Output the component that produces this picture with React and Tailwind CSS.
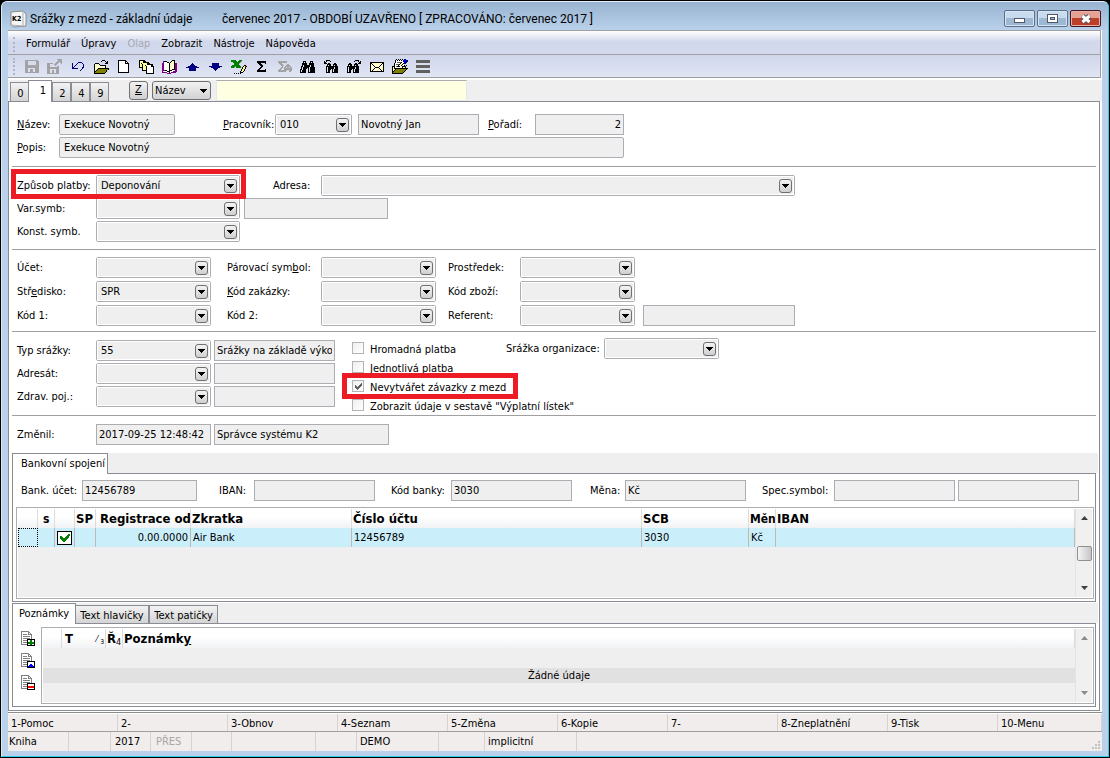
const palette = {
    k: "#000000",
    w: "#ffffff",
    y: "#ffff99",
    o: "#808000",
    b: "#000080",
    g: "#008000",
    s: "#a3a3a6",
    p: "#800080",
    r: "#ee0000",
    u: "#0000ff",
    d: "#606060",
};

// Draws an old style bitmap icon, one character per pixel
function PixelIcon({ rows }) {
    return (
        <svg width={rows[0].length} height={rows.length} shapeRendering="crispEdges" aria-hidden="true">
            {rows.flatMap((row, y) =>
                [...row].map((c, x) =>
                    palette[c] ? <rect key={x + "-" + y} x={x} y={y} width="1" height="1" fill={palette[c]} /> : null
                )
            )}
        </svg>
    );
}

const icons = {
    save: [
        "sssssssssssss.",
        "sss........sss",
        "sss........sss",
        "sss........sss",
        "sss........sss",
        "ssssssssssssss",
        "ssssssssssssss",
        "ssssssssssssss",
        "sss.......ssss",
        "sss..sss..ssss",
        "sss..sss..ssss",
        "sss..sss..ssss",
        "ssssssssssssss",
    ],
    saveAs: [
        "..........sssss",
        "...........ssss",
        "..........sssss",
        ".........sss.ss",
        "ssssss..sss...s",
        "sss....sss.....",
        "sss.....s......",
        "sss.......ss...",
        "ssssssssssss...",
        "ssssssssssss...",
        "sss......sss...",
        "sss..ss..sss...",
        "sss..ss..sss...",
        "sss..ss..sss...",
        "ssssssssssss...",
    ],
    undo: [
        "......bbbb..",
        "b....b....b.",
        "b...b......b",
        "b..b.......b",
        "b.b........b",
        "bb........bb",
        "bbbbbb....b.",
        ".........b..",
        "........b...",
    ],
    open: [
        ".........kkk....",
        "........k...k.k.",
        ".............kk.",
        "..kkkk......kkk.",
        ".kywywk.........",
        ".kwywywkkkkkk...",
        ".kywywywywywk...",
        ".kwywywywywyk...",
        ".kywykkkkkkkkkkk",
        ".kwykooooooooook",
        ".kykoooooooook..",
        ".kkooooooooook..",
        ".kooooooooook...",
        ".kkkkkkkkkkk....",
    ],
    fresh: [
        "kkkkkkkk...",
        "kwwwwwwkk..",
        "kwwwwwwkwk.",
        "kwwwwwwkkkk",
        "kwwwwwwwwwk",
        "kwwwwwwwwwk",
        "kwwwwwwwwwk",
        "kwwwwwwwwwk",
        "kwwwwwwwwwk",
        "kwwwwwwwwwk",
        "kwwwwwwwwwk",
        "kwwwwwwwwwk",
        "kkkkkkkkkkk",
    ],
    copy: [
        "kkkkkk.........",
        "kyyykkk........",
        "kyyykkkkkk.....",
        "kykyyyyykkk....",
        "kyykyyyykkkkkk.",
        "kyykyykwwwwwkk.",
        "kyykyyykwwwwkkk",
        "kkkkyyykwwwwwwk",
        "...kyyykwwwwwwk",
        "...kyyykwwwwwwk",
        "...kkkkkwwwwwwk",
        ".......kwwwwwwk",
        ".......kwwwwwwk",
        ".......kkkkkkkk",
    ],
    book: [
        "..........kkk..",
        ".pkkk....kyyk..",
        ".pwwwkk.kywyk..",
        "ppwwwwwkwywykpp",
        "ppwwwwwkywywkpp",
        "ppwwwwwkwywykpp",
        "ppwwwwwkywywkpp",
        "ppwwwwwkwywykpp",
        "ppwwwwwkywywkpp",
        "ppwwwwwkwykkkpp",
        "pppkkwwkkkwwwpp",
        "p.wwwkkkwwwpppp",
        "pppppwwkwppppp.",
        ".....pppp......",
    ],
    up: [
        "......b......",
        ".....bbb.....",
        "....bbbbb....",
        "..bbbbbbbbb..",
        "bbbbbbbbbbbbb",
        "...bbbbbbb...",
        "...bbbbbbb...",
        "...bbbbbbb...",
    ],
    down: [
        "...bbbbbbb...",
        "...bbbbbbb...",
        "...bbbbbbb...",
        "bbbbbbbbbbbbb",
        "..bbbbbbbbb..",
        "....bbbbb....",
        ".....bbb.....",
        "......b......",
    ],
    excel: [
        "ggggg...ggg.....",
        "gggggg.gggs.....",
        "..gggggggs......",
        "...gggggs.......",
        "...ggggg........",
        ".gggggggg....kk.",
        "ggggsggggg..kyrk",
        "gggs.ggggg.kyyk.",
        "...........kyyk.",
        "..........kyyk..",
        "..........kyyk..",
        ".........kyyk...",
        ".........kkk....",
        "...k.k.k.k......",
    ],
    sum: [
        "kkkkkkkkk",
        "kkkkkkkkk",
        ".kkk....k",
        "..kkk....",
        "...kkk...",
        "....kk...",
        "...kk....",
        "..kk.....",
        ".kk.....k",
        "kkkkkkkkk",
        "kkkkkkkkk",
    ],
    sumGray: [
        "sssssssss.....",
        "sssssssss.....",
        ".sss..........",
        "..sss....ss...",
        "...sss..ssss..",
        "....s..ssssss.",
        "...ss.ss.ss.ss",
        "..ss..ssssssss",
        ".ss...ssssssss",
        "sssssssss..sss",
        "ssssssss...ss.",
    ],
    find: [
        "...kkk....kkk..",
        "...k.k....k.k..",
        "..kkkkk..kkkkk.",
        "..kkkkk..kkkkk.",
        "..k.kkkkkk.kkk.",
        ".kk.kkkkkk.kkk.",
        ".k.kkkkkk.kkkkk",
        ".k.kkkk.k.kkkkk",
        "kk.kkk..k.kkkkk",
        "k.kkkk..k.kkkkk",
        "k.kkkk..k.kkkkk",
        "kkkkkk..kkkkkkk",
    ],
    findPrev: [
        "..kkkk........",
        "k.k...k.......",
        "kk............",
        "kkk.kk....kk..",
        "...kkkk..kkkk.",
        "...k.kk..k.kk.",
        "..kkkkkkkkkkkk",
        "..k.kkkkkk.kkk",
        "..k.kkkkkk.kkk",
        "..k.kkk.k.kkkk",
        "..k.kk..k.kkkk",
        "..k.kk..k.kkkk",
        "..kkkk..kkkkkk",
    ],
    findNext: [
        "........kkkk..",
        ".......k...k.k",
        "............kk",
        "..kk....kk.kkk",
        ".kkkk..kkkk...",
        ".k.kk..k.kk...",
        "kkkkkkkkkkkk..",
        "k.kkkkkk.kkk..",
        "k.kkkkkk.kkk..",
        "k.kkk.k.kkkk..",
        "k.kk..k.kkkk..",
        "k.kk..k.kkkk..",
        "kkkk..kkkkkk..",
    ],
    mail: [
        "kkkkkkkkkkkkkk",
        "kkyywyywyywykk",
        "kwkywywywywkwk",
        "kywkywywywkwyk",
        "kwywkywywkywyk",
        "kywywkkkkwywyk",
        "kwywkwywykywyk",
        "kywkywywywkwyk",
        "kwkywywywywkyk",
        "kkkkkkkkkkkkkk",
    ],
    notes: [
        "....k.k.k.k.bb..",
        "...kwkwkwkwbuubb",
        "...kwwwwwwwbubbb",
        "...kwddddkwwbbb.",
        "..kwwwwwkywkbb..",
        "..kwdddkyykw....",
        "..kwwwkyykwwk.k.",
        "kkkwdkkkwwkkkk..",
        "kykwwwwwwwkyyk..",
        "kykkkkkkkkkkkkkk",
        "kyykooooooooook.",
        "kykooooooooook..",
        "kkooooooooook...",
        "kooooooooook....",
        "kkkkkkkkkkk.....",
    ],
    menu: [
        "dddddddddddddd",
        "dddddddddddddd",
        "dddddddddddddd",
        "..............",
        "..............",
        "dddddddddddddd",
        "dddddddddddddd",
        "dddddddddddddd",
        "..............",
        "..............",
        "dddddddddddddd",
        "dddddddddddddd",
        "dddddddddddddd",
    ],
    arrow: [
        "kkkkkkk",
        ".kkkkk.",
        "..kkk..",
        "...k...",
    ],
    check: [
        "........gg",
        ".......ggg",
        "gg....ggg.",
        "ggg..gggg.",
        "gggggggg..",
        ".gggggg...",
        "..gggg....",
        "...gg.....",
    ],
    checkGray: [
        "......d",
        ".....dd",
        "d...ddd",
        "dd.ddd.",
        "ddddd..",
        ".ddd...",
        "..d....",
    ],
};

const tools = [
    ["Uložit", "save"],
    ["Uložit jako", "saveAs"],
    ["Zpět", "undo"],
    ["Otevřít", "open"],
    ["Nový", "fresh"],
    ["Kopie", "copy"],
    ["Kniha", "book"],
    ["Předchozí", "up"],
    ["Další", "down"],
    ["Excel", "excel"],
    ["Součet", "sum"],
    ["Součet výběru", "sumGray"],
    ["Hledat", "find"],
    ["Hledat předchozí", "findPrev"],
    ["Hledat další", "findNext"],
    ["E-mail", "mail"],
    ["Poznámky", "notes"],
    ["Menu", "menu"],
];

function Label({ id, className, children }) {
    return (
        <label htmlFor={id} className={"shrink-0 pt-[2px] whitespace-nowrap " + className}>
            {children}
        </label>
    );
}

function Field({ id, value = "", className = "", label }) {
    return (
        <input
            id={id}
            aria-label={label}
            readOnly
            value={value}
            className={"h-[21px] min-w-0 border border-[#abadb3] bg-[#efefef] px-[2px] outline-none " + className}
        />
    );
}

function Combo({ id, value = "", className }) {
    return (
        <div className={"relative h-[21px] rounded-[2px] border border-[#abadb3] bg-[#f4f4f4] " + className}>
            <select id={id} defaultValue={value} className="block h-full w-full appearance-none border border-white bg-[#efefef] pt-px pl-[3px] outline-none">
                <option>{value}</option>
            </select>
            <span className="pointer-events-none absolute top-[3px] right-[2px] flex h-[14px] w-[13px] items-center justify-center rounded-[3px] border border-[#707070] bg-linear-to-b from-[#f4f4f4] to-[#cfcfcf]">
                <PixelIcon rows={icons.arrow} />
            </span>
        </div>
    );
}

function CheckField({ id, checked = false, children }) {
    return (
        <div className="flex h-[19px] items-start">
            <span className="mt-px grid h-[12px] w-[12px] place-items-center">
                <input
                    id={id}
                    type="checkbox"
                    defaultChecked={checked}
                    className="col-start-1 row-start-1 h-[12px] w-[12px] appearance-none border border-[#b4b4b4] bg-linear-to-br from-[#efefef] to-white"
                />
                {checked && (
                    <span className="pointer-events-none col-start-1 row-start-1">
                        <PixelIcon rows={icons.checkGray} />
                    </span>
                )}
            </span>
            <label htmlFor={id} className="ml-[6px] leading-[18px] whitespace-nowrap">
                {children}
            </label>
        </div>
    );
}

function PageTab({ children, active }) {
    return (
        <button
            className={
                active
                    ? "z-10 -mb-px h-[22px] w-[24px] border-x border-t border-[#898c95] bg-white pl-[6px]"
                    : "-mr-px h-[19px] w-[19px] border-x border-t border-[#898c95] bg-linear-to-b from-[#f2f2f2] to-[#d4d4d4] pt-[3px] pl-[2px]"
            }
        >
            {children}
        </button>
    );
}

function ScrollBar({ thumb }) {
    const tone = thumb ? "#404040" : "#8a8a8a";
    return (
        <div className="flex w-[17px] shrink-0 flex-col items-center justify-between border-l border-[#e3e3e3] bg-[#f0f0f0] py-[7px]">
            <svg width="7" height="4" aria-hidden="true"><path d="M3.5 0L7 4H0z" fill={tone} /></svg>
            {thumb && <span className="h-[15px] w-[15px] rounded-[2px] border border-[#8f8f8f] bg-linear-to-r from-[#f5f5f5] to-[#c6c6c9]" />}
            <svg width="7" height="4" aria-hidden="true"><path d="M0 0H7L3.5 4z" fill={tone} /></svg>
        </div>
    );
}

function NoteIcon({ kind }) {
    return (
        <svg width="15" height="16" shapeRendering="crispEdges" aria-hidden="true">
            <path d="M1.5 .5H8.5L11.5 3.5V13.5H1.5z" fill="#fff" stroke="#808080" />
            <path d="M8.5 .5V3.5H11.5M3 3.5H7M3 5.5H10M3 7.5H10M3 9.5H7M3 11.5H7" fill="none" stroke="#808080" />
            <rect x="7.5" y="8.5" width="7" height="6" fill="#fff" stroke="#000" />
            {kind === "add" && <path d="M10 9h2v2h2v2h-2v1h-2v-1h-2v-2h2z" fill="#008000" />}
            {kind === "edit" && <path d="M10 11h2v1h1v1h1v1H8v-1h1v-1h1z" fill="#0000ff" />}
            {kind === "remove" && <path d="M8 11h6v2H8z" fill="#ff0000" />}
        </svg>
    );
}

const headCell = "border-r border-[#dcdcdc] p-0 px-px pt-px text-left whitespace-nowrap overflow-hidden";
const bodyCell = "border-r border-[#bdb9b5] p-0 px-[2px] whitespace-nowrap overflow-hidden";
const line = "border-t border-[#a0a0a0] mx-[3px]";

export default function App() {
    return (
        <div className="flex min-h-screen flex-col border border-black bg-black font-['DejaVu_Sans_Condensed','Noto_Sans',sans-serif] text-[11px] text-black">
            <div className="flex flex-1 flex-col rounded-t-[6px] border border-t-[#e6f0fa] border-r-[#2ccbe8] border-b-[#2ccbe8] border-l-[#dcebf8] bg-[#b9d1ea] px-[6px] pb-[5px]">

                {/* Title bar */}
                <header className="-mx-[6px] flex h-[28px] items-center rounded-t-[5px] bg-linear-to-b from-[#98b3d1] to-[#b9d1ea] pt-[5px] pr-[7px] pl-[8px] font-[Roboto,'Noto_Sans',sans-serif] text-[12px]">
                    <svg width="17" height="18" aria-hidden="true">
                        <path d="M1 2l12-1 3 3v12l-12 1-3-2z" fill="#f6f6f6" stroke="#8a8a8a" />
                        <path d="M13 1v15M1 15l12 1" stroke="#b0b0b0" fill="none" />
                        <text x="2" y="11" fontSize="7" fontWeight="bold" fontFamily="DejaVu Sans Condensed">K2</text>
                    </svg>
                    <h1 className="ml-[3px] w-[192px] whitespace-nowrap">Srážky z mezd - základní údaje</h1>
                    <span className="whitespace-nowrap">červenec 2017 - OBDOBÍ UZAVŘENO [ ZPRACOVÁNO: červenec 2017 ]</span>
                    <div className="ml-auto flex gap-[2px]">
                        <button aria-label="Minimalizovat" className="flex h-[17px] w-[31px] items-center justify-center rounded-[2px] border border-[#5b6f8b] bg-linear-to-b from-[#c8dbee] from-50% to-[#9db8d3] to-50% shadow-[inset_0_0_0_1px_#d7e6f4]">
                            <svg width="11" height="11" shapeRendering="crispEdges"><rect x=".5" y="5.5" width="10" height="4" fill="#fff" stroke="#535666" /></svg>
                        </button>
                        <button aria-label="Maximalizovat" className="flex h-[17px] w-[31px] items-center justify-center rounded-[2px] border border-[#5b6f8b] bg-linear-to-b from-[#c8dbee] from-50% to-[#9db8d3] to-50% shadow-[inset_0_0_0_1px_#d7e6f4]">
                            <svg width="11" height="9" shapeRendering="crispEdges">
                                <rect x=".5" y=".5" width="10" height="8" fill="#fff" stroke="#535666" />
                                <rect x="3.5" y="3.5" width="4" height="2" fill="#9db8d3" stroke="#535666" />
                            </svg>
                        </button>
                        <button aria-label="Zavřít" className="flex h-[17px] w-[31px] items-center justify-center rounded-[2px] border border-[#431422] bg-linear-to-b from-[#e4a294] from-50% to-[#bd3f27] to-50% shadow-[inset_0_0_0_1px_#e6b0a6]">
                            <svg width="12" height="10">
                                <path d="M2.5 2l7 6M9.5 2l-7 6" stroke="#535666" strokeWidth="5" />
                                <path d="M2.5 2l7 6M9.5 2l-7 6" stroke="#fff" strokeWidth="3" />
                            </svg>
                        </button>
                    </div>
                </header>

                <main className="flex flex-1 flex-col bg-white">

                    {/* Menu and toolbar */}
                    <div className="mr-px border border-l-0 border-[#a0a0a0]">
                        <nav className="flex h-[23px] items-center gap-[11px] bg-linear-to-b from-white to-[#d3d9ec] to-45% pt-[4px] pl-[5px]">
                            <span className="h-[15px] border-l-2 border-dotted border-[#b0b4c4]" />
                            <button>Formulář</button>
                            <button>Úpravy</button>
                            <button disabled className="text-[#a6a8b4]">Olap</button>
                            <button>Zobrazit</button>
                            <button>Nástroje</button>
                            <button>Nápověda</button>
                        </nav>
                        <div className="flex h-[23px] items-center border-t border-[#a0a0a0] bg-linear-to-b from-[#cfd6ea] to-[#e1e6f5] pt-px pl-[5px]">
                            <span className="mr-[5px] h-[17px] border-l-2 border-dotted border-[#b0b4c4]" />
                            {tools.map(([name, icon]) => (
                                <button key={name} aria-label={name} className="flex h-[20px] w-[23px] items-center justify-center">
                                    <PixelIcon rows={icons[icon]} />
                                </button>
                            ))}
                        </div>
                    </div>

                    {/* Page tabs and quick filter */}
                    <div className="mt-[2px] flex h-[21px] items-end bg-[#efefef] pl-[2px]">
                        <PageTab>0</PageTab>
                        <PageTab active>1</PageTab>
                        <PageTab>2</PageTab>
                        <span className="w-px" />
                        <PageTab>4</PageTab>
                        <span className="w-px" />
                        <PageTab>9</PageTab>
                        <button className="mb-[1px] ml-[21px] h-[19px] w-[19px] rounded-[3px] border border-[#707070] bg-linear-to-b from-[#f2f2f2] to-[#cfcfcf]">
                            <u>Z</u>
                        </button>
                        <div className="relative mb-[1px] ml-[4px] w-[59px]">
                            <select aria-label="Řazení" className="block h-[19px] w-full appearance-none rounded-[3px] border border-[#707070] bg-linear-to-b from-[#f2f2f2] to-[#d2d2d2] pt-px pl-[2px]">
                                <option>Název</option>
                            </select>
                            <span className="pointer-events-none absolute top-[8px] right-[4px]">
                                <PixelIcon rows={icons.arrow} />
                            </span>
                        </div>
                        <input aria-label="Filtr" className="ml-[5px] h-[21px] w-[251px] border border-[#e3e9ef] border-t-[#abadb3] bg-[#ffffe1]" />
                    </div>

                    {/* Form */}
                    <div className="mr-[2px] flex flex-1 flex-col border border-[#898c95]">
                        <section className="flex flex-col gap-[2px] pt-[12px] pb-[8px] pl-[8px]">
                            <div className="flex items-center">
                                <Label id="nazev" className="w-[42px]"><u>N</u>ázev:</Label>
                                <Field id="nazev" value="Exekuce Novotný" className="w-[116px] rounded-[2px] pl-[4px]" />
                                <Label id="pracovnik" className="ml-[48px] w-[52px]"><u>P</u>racovník:</Label>
                                <Combo id="pracovnik" value="010" className="w-[77px]" />
                                <Field value="Novotný Jan" label="Jméno pracovníka" className="ml-[6px] w-[121px]" />
                                <Label id="poradi" className="ml-[9px] w-[47px]"><u>P</u>ořadí:</Label>
                                <Field id="poradi" value="2" className="w-[89px] text-right" />
                            </div>
                            <div className="flex items-center">
                                <Label id="popis" className="w-[42px]"><u>P</u>opis:</Label>
                                <Field id="popis" value="Exekuce Novotný" className="w-[565px] rounded-[2px] pl-[4px]" />
                            </div>
                        </section>

                        <div className={line} />

                        <section className="relative flex flex-col gap-[2px] pt-[8px] pb-[7px] pl-[8px]">
                            <div className="flex items-center">
                                <Label id="zpusob" className="w-[79px]">Způsob platby:</Label>
                                <Combo id="zpusob" value="Deponování" className="w-[144px]" />
                                <Label id="adresa" className="ml-[33px] w-[48px]">Adresa:</Label>
                                <Combo id="adresa" className="w-[474px]" />
                            </div>
                            <div className="flex items-center">
                                <Label id="varsymb" className="w-[79px]">Var.symb:</Label>
                                <Combo id="varsymb" className="w-[144px]" />
                                <Field label="Popis var. symbolu" className="ml-[4px] w-[144px]" />
                            </div>
                            <div className="flex items-center">
                                <Label id="konstsymb" className="w-[79px]">Konst. symb.</Label>
                                <Combo id="konstsymb" className="w-[144px]" />
                            </div>
                            <span className="pointer-events-none absolute top-[2px] left-[2px] h-[30px] w-[235px] border-5 border-[#ed1c24]" />
                        </section>

                        <div className={line} />

                        <section className="flex flex-col gap-[3px] pt-[7px] pb-[5px] pl-[8px]">
                            <div className="flex items-center">
                                <Label id="ucet" className="w-[79px]">Účet:</Label>
                                <Combo id="ucet" className="w-[115px]" />
                                <Label id="parovaci" className="ml-[16px] w-[94px]">Párovací sym<u>b</u>ol:</Label>
                                <Combo id="parovaci" className="w-[115px]" />
                                <Label id="prostredek" className="ml-[12px] w-[72px]">Prostředek:</Label>
                                <Combo id="prostredek" className="w-[115px]" />
                            </div>
                            <div className="flex items-center">
                                <Label id="stredisko" className="w-[79px]">Stř<u>e</u>disko:</Label>
                                <Combo id="stredisko" value="SPR" className="w-[115px]" />
                                <Label id="zakazka" className="ml-[16px] w-[94px]"><u>K</u>ód zakázky:</Label>
                                <Combo id="zakazka" className="w-[115px]" />
                                <Label id="zbozi" className="ml-[12px] w-[72px]">Kód zboží:</Label>
                                <Combo id="zbozi" className="w-[115px]" />
                            </div>
                            <div className="flex items-center">
                                <Label id="kod1" className="w-[79px]">Kód 1:</Label>
                                <Combo id="kod1" className="w-[115px]" />
                                <Label id="kod2" className="ml-[16px] w-[94px]">Kód 2:</Label>
                                <Combo id="kod2" className="w-[115px]" />
                                <Label id="referent" className="ml-[12px] w-[72px]">Referent:</Label>
                                <Combo id="referent" className="w-[115px]" />
                                <Field label="Jméno referenta" className="ml-[8px] w-[152px]" />
                            </div>
                        </section>

                        <div className={line} />

                        <section className="flex items-start pt-[8px] pb-[8px] pl-[8px]">
                            <div className="flex flex-col gap-[2px]">
                                <div className="flex items-center">
                                    <Label id="typ" className="w-[79px]">Typ srážky:</Label>
                                    <Combo id="typ" value="55" className="w-[115px]" />
                                    <Field label="Název srážky" value="Srážky na základě výkon" className="ml-[3px] w-[121px]" />
                                </div>
                                <div className="flex items-center">
                                    <Label id="adresat" className="w-[79px]">Adresát:</Label>
                                    <Combo id="adresat" className="w-[115px]" />
                                    <Field label="Název adresáta" className="ml-[3px] w-[121px]" />
                                </div>
                                <div className="flex items-center">
                                    <Label id="poj" className="w-[79px]">Zdrav. poj.:</Label>
                                    <Combo id="poj" className="w-[115px]" />
                                    <Field label="Název pojišťovny" className="ml-[3px] w-[121px]" />
                                </div>
                            </div>
                            <div className="relative ml-[17px] h-[67px] w-[154px] pt-px">
                                <CheckField id="hromadna">Hromadná platba</CheckField>
                                <CheckField id="jednotliva">Jednotlivá platba</CheckField>
                                <CheckField id="zavazky" checked>Nevytvářet závazky z mezd</CheckField>
                                <CheckField id="listek">Zobrazit údaje v sestavě "Výplatní lístek"</CheckField>
                                <span className="pointer-events-none absolute top-[33px] left-[-10px] h-[26px] w-[176px] border-5 border-[#ed1c24]" />
                            </div>
                            <div className="-mt-[2px] flex items-center">
                                <Label id="organizace" className="w-[98px]">Srážka organizace:</Label>
                                <Combo id="organizace" className="w-[115px]" />
                            </div>
                        </section>

                        <div className={line} />

                        <section className="flex items-center gap-[3px] pt-[8px] pb-[8px] pl-[8px]">
                            <Label id="zmenil" className="w-[76px]">Změnil:</Label>
                            <Field id="zmenil" value="2017-09-25 12:48:42" className="w-[115px]" />
                            <Field label="Změnil uživatel" value="Správce systému K2" className="w-[175px]" />
                        </section>

                        {/* Bank connection */}
                        <div className="mr-px ml-[3px] flex h-[20px] bg-[#efefef]">
                            <button className="z-10 -mb-px h-[21px] w-[96px] border-x border-t border-[#898c95] bg-white pl-[6px] whitespace-nowrap">Bankovní spojení</button>
                        </div>
                        <section className="mx-[3px] border border-[#898c95] pt-[6px] pr-px pb-[2px] pl-[3px]">
                            <div className="flex items-center pl-[5px]">
                                <Label id="bucet" className="w-[61px]">Bank. účet:</Label>
                                <Field id="bucet" value="12456789" className="w-[115px]" />
                                <Label id="iban" className="ml-[22px] w-[35px]">IBAN:</Label>
                                <Field id="iban" className="w-[121px]" />
                                <Label id="kodb" className="ml-[16px] w-[60px]">Kód banky:</Label>
                                <Field id="kodb" value="3030" className="w-[121px]" />
                                <Label id="mena" className="ml-[18px] w-[35px]">Měna:</Label>
                                <Field id="mena" value="Kč" className="w-[121px]" />
                                <Label id="spec" className="ml-[16px] w-[72px]">Spec.symbol:</Label>
                                <Field id="spec" className="w-[121px]" />
                                <Field label="Spec. symbol 2" className="ml-[3px] w-[121px]" />
                            </div>
                            <div className="mt-[6px] flex h-[92px] border border-[#abadb3] bg-white p-px">
                                <div className="flex-1 bg-[#efefef]">
                                    <table className="w-full table-fixed border-separate border-spacing-0">
                                        <colgroup>
                                            <col className="w-[20px]" />
                                            <col className="w-[17px]" />
                                            <col className="w-[20px]" />
                                            <col className="w-[21px]" />
                                            <col className="w-[95px]" />
                                            <col className="w-[161px]" />
                                            <col className="w-[290px]" />
                                            <col className="w-[107px]" />
                                            <col className="w-[27px]" />
                                            <col />
                                        </colgroup>
                                        <thead>
                                            <tr className="h-[19px] bg-linear-to-b from-white from-40% to-[#f1f2f4] text-[13px] leading-[18px]">
                                                <th className={headCell} />
                                                <th className={headCell + " pl-[5px] text-[12px]"}>s</th>
                                                <th className={headCell} />
                                                <th className={headCell}>SP</th>
                                                <th className={headCell + " pl-[4px]"}>Registrace od</th>
                                                <th className={headCell}>Zkratka</th>
                                                <th className={headCell}>Číslo účtu</th>
                                                <th className={headCell}>SCB</th>
                                                <th className={headCell + " pr-0 text-[12px]"}>Měn</th>
                                                <th className={headCell}>IBAN</th>
                                            </tr>
                                        </thead>
                                        <tbody>
                                            <tr className="h-[17px] bg-[#cbeffa] leading-[19px]">
                                                <td className="border border-dotted border-black p-0" />
                                                <td className={bodyCell} />
                                                <td className={bodyCell}>
                                                    <span className="flex h-[14px] w-[15px] items-center justify-center border border-black bg-white">
                                                        <PixelIcon rows={icons.check} />
                                                    </span>
                                                </td>
                                                <td className={bodyCell} />
                                                <td className={bodyCell + " text-right"}>0.00.0000</td>
                                                <td className={bodyCell}>Air Bank</td>
                                                <td className={bodyCell}>12456789</td>
                                                <td className={bodyCell}>3030</td>
                                                <td className={bodyCell}>Kč</td>
                                                <td className={bodyCell} />
                                            </tr>
                                        </tbody>
                                    </table>
                                </div>
                                <ScrollBar thumb />
                            </div>
                        </section>

                        {/* Notes */}
                        <div className="mt-px mr-px ml-[3px] flex h-[20px] items-end bg-[#efefef]">
                            <button className="z-10 -mb-px h-[21px] w-[64px] border-x border-t border-[#898c95] bg-white">Poznámky</button>
                            <button className="h-[18px] w-[73px] border-t border-r border-[#898c95] bg-linear-to-b from-[#f2f2f2] to-[#d4d4d4] pt-[2px] whitespace-nowrap">Text hlavičky</button>
                            <button className="h-[18px] w-[69px] border-x border-t border-[#898c95] bg-linear-to-b from-[#f2f2f2] to-[#d4d4d4] pt-[2px] whitespace-nowrap">Text patičky</button>
                        </div>
                        <section className="mx-[3px] mb-[3px] flex flex-1 border border-[#898c95] pt-[3px] pr-[1px] pb-[2px]">
                            <div className="flex w-[28px] flex-col items-center gap-[6px] pt-[4px]">
                                <button aria-label="Přidat poznámku"><NoteIcon kind="add" /></button>
                                <button aria-label="Upravit poznámku"><NoteIcon kind="edit" /></button>
                                <button aria-label="Smazat poznámku"><NoteIcon kind="remove" /></button>
                            </div>
                            <div className="flex flex-1 border border-[#abadb3] p-px">
                                <div className="flex-1 bg-[#efefef]">
                                    <table className="w-full table-fixed border-separate border-spacing-0">
                                        <colgroup>
                                            <col className="w-[19px]" />
                                            <col className="w-[44px]" />
                                            <col className="w-[17px]" />
                                            <col />
                                        </colgroup>
                                        <thead>
                                            <tr className="h-[19px] bg-linear-to-b from-white from-40% to-[#f1f2f4] text-[13px] leading-[18px]">
                                                <th className={headCell} />
                                                <th className={headCell + " pl-[3px]"}>
                                                    <span className="flex justify-between">
                                                        T
                                                        <span className="text-[9px] font-normal">⁄ <sub>3</sub></span>
                                                    </span>
                                                </th>
                                                <th className={headCell}>Ř<sub className="text-[9px] font-normal">4</sub></th>
                                                <th className={headCell}>Poznámk<u>y</u></th>
                                            </tr>
                                        </thead>
                                        <tbody>
                                            <tr className="h-[20px]"><td colSpan={4} /></tr>
                                            <tr className="h-[15px] bg-[#e1e1e1] leading-[15px]">
                                                <td colSpan={4} className="p-0 text-center">Žádné údaje</td>
                                            </tr>
                                        </tbody>
                                    </table>
                                </div>
                                <ScrollBar />
                            </div>
                        </section>
                    </div>

                    {/* Function keys */}
                    <div className="mt-px border-t border-[#8c8c8c] bg-[#f0edec]">
                        <div className="flex h-[19px] items-center border-y border-t-white border-b-[#a0a0a0]">
                            {["1-Pomoc", "2-", "3-Obnov", "4-Seznam", "5-Změna", "6-Kopie", "7-", "8-Zneplatnění", "9-Tisk", "10-Menu"].map((key) => (
                                <button key={key} className="h-[17px] w-[110px] border-r border-[#d5d2d1] pt-[2px] pl-[3px] text-left last:flex-1">{key}</button>
                            ))}
                        </div>
                        <footer className="flex h-[19px] items-stretch leading-[20px] whitespace-nowrap">
                            <span className="w-[61px] border-r border-[#d5d2d1] pl-px">Kniha</span>
                            <span className="w-[42px] border-r border-[#d5d2d1]" />
                            <span className="w-[40px] border-r border-[#d5d2d1] pl-[4px]">2017</span>
                            <span className="w-[41px] border-r border-[#d5d2d1] pl-[5px] text-[#a9a6a5]">PŘES</span>
                            <span className="w-[40px] border-r border-[#d5d2d1]" />
                            <span className="w-[84px] border-r border-[#d5d2d1]" />
                            <span className="w-[41px] border-r border-[#d5d2d1]" />
                            <span className="w-[82px] border-r border-[#d5d2d1] pl-[3px]">DEMO</span>
                            <span className="w-[46px] border-r border-[#d5d2d1]" />
                            <span className="w-[92px] border-r border-[#d5d2d1] pl-[3px]">implicitní</span>
                            <svg width="10" height="10" className="mt-auto mr-px mb-px ml-auto" aria-hidden="true">
                                <path d="M7 1h2v2h-2zM7 4h2v2h-2zM7 7h2v2h-2zM4 4h2v2h-2zM4 7h2v2h-2zM1 7h2v2h-2z" fill="#c4c2c1" />
                            </svg>
                        </footer>
                    </div>
                </main>
            </div>
        </div>
    );
}
